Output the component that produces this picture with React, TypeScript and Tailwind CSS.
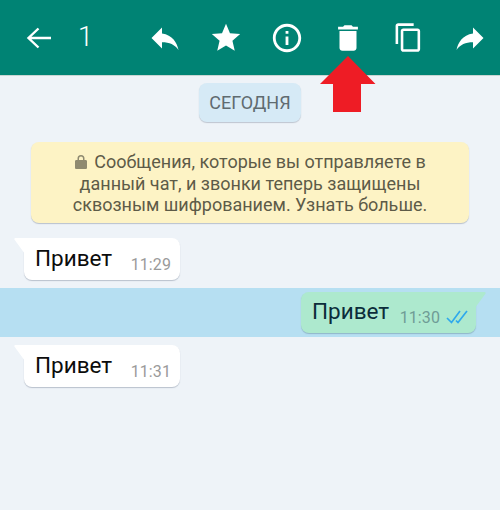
import React from "react";

function Icon({ d, size = 34, fill = "white" }: { d: string; size?: number; fill?: string }) {
  return (
    <svg width={size} height={size} viewBox="0 0 24 24" fill={fill}>
      <path d={d} />
    </svg>
  );
}

function Slot({ children, className = "w-[61px]" }: { children: React.ReactNode; className?: string }) {
  return <div className={`flex h-full shrink-0 items-center justify-center ${className}`}>{children}</div>;
}

function Incoming({ time }: { time: string }) {
  return (
    <div className="relative ml-6 flex h-[42px] w-[156px] rounded-b-lg rounded-tr-lg bg-white shadow-[0_1px_1px_rgba(120,130,150,0.45)]">
      <svg className="absolute -left-2.5 top-0" width="11" height="16" viewBox="0 0 11 16">
        <path d="M11 0H1.5C0.5 0 0 1 0.6 1.8L11 16z" fill="white" />
      </svg>
      <span className="ml-[11px] mt-[5px] text-[22.5px] leading-[30px] text-[#0c0c0c]">Привет</span>
      <span className="absolute right-[9px] top-[17px] text-[16px] leading-5 tracking-[0.1px] text-[#9a9a9a]">{time}</span>
    </div>
  );
}

export default function App() {
  return (
    <div className="flex h-[510px] w-[500px] flex-col overflow-hidden bg-[#eef3f8] font-['Roboto',sans-serif]">
      <header className="relative flex h-[76px] shrink-0 items-center border-b border-[#c9d6d3] bg-[#008374] pl-[8px]">
        <Slot className="w-[62px]">
          <svg width="28" height="24" viewBox="0 0 28 24" fill="none" stroke="white" strokeWidth="2.4">
            <path d="M26 12H4M13.5 2.5L3.5 12l10 9.5" />
          </svg>
        </Slot>
        <Slot className="w-[31px]">
          <span className="text-[27px] font-light leading-none text-white">1</span>
        </Slot>
        <Slot className="w-[33px]"><span /></Slot>
        <Slot>
          <Icon size={36} d="M10 9V5l-7 7 7 7v-4.1c5 0 8.500 1.600 11 5.100-1-5-4-10-11-11z" />
        </Slot>
        <Slot>
          <Icon d="M12 17.27L18.18 21l-1.64-7.03L22 9.24l-7.19-.61L12 2 9.19 8.63 2 9.24l5.46 4.73L5.82 21z" />
        </Slot>
        <Slot>
          <Icon d="M11 7h2v2h-2zm0 4h2v6h-2zm1-9C6.48 2 2 6.48 2 12s4.48 10 10 10 10-4.48 10-10S17.52 2 12 2zm0 18c-4.41 0-8-3.59-8-8s3.59-8 8-8 8 3.59 8 8-3.59 8-8 8z" />
        </Slot>
        <Slot>
          <Icon d="M6 19c0 1.1.9 2 2 2h8c1.1 0 2-.9 2-2V7H6v12zM19 4h-3.5l-1-1h-5l-1 1H5v2h14V4z" />
        </Slot>
        <Slot>
          <Icon size={31} d="M16 1H4c-1.1 0-2 .9-2 2v14h2V3h12V1zm3 4H8c-1.1 0-2 .9-2 2v14c0 1.1.9 2 2 2h11c1.1 0 2-.9 2-2V7c0-1.1-.9-2-2-2zm0 16H8V7h11v14z" />
        </Slot>
        <Slot>
          <Icon size={36} d="M14 9V5l7 7-7 7v-4.1c-5 0-8.500 1.600-11 5.100 1-5 4-10 11-11z" />
        </Slot>
        {/* red pointer over the delete icon */}
        <svg className="absolute left-[320px] top-[56px] z-10" width="56" height="56" viewBox="0 0 56 56">
          <path d="M28 0L55.5 28H41V56H13V28H0z" fill="#ee1c25" />
        </svg>
      </header>

      <main className="flex flex-col">
        <div className="mt-[7px] flex justify-center">
          <div className="flex h-[39px] w-[102px] items-center justify-center rounded-lg bg-[#d6eaf6] text-[18px] text-[#5f6b70] shadow-[0_1px_1px_rgba(120,130,150,0.4)]">
            СЕГОДНЯ
          </div>
        </div>

        <div className="mx-[31px] mt-5 flex h-[81px] flex-col items-center justify-center rounded-lg bg-[#fdf3c5] pt-[2px] text-center text-[18px] leading-[21.5px] text-[#5d5b48] shadow-[0_1px_1px_rgba(120,130,150,0.45)]">
          <p className="flex items-center">
            <svg className="mr-[6px]" width="14" height="16" viewBox="0 0 14 16">
              <path d="M3.5 6V4.5a3.5 3.5 0 0 1 7 0V6h1.200c.7 0 1.300.6 1.300 1.300v6.400c0 .7-.6 1.300-1.300 1.300H2.300C1.600 15 1 14.400 1 13.700V7.300C1 6.600 1.600 6 2.300 6zM5 6h4V4.500a2 2 0 0 0-4 0z" fill="#8f8a70" />
            </svg>
            Сообщения, которые вы отправляете в
          </p>
          <p>данный чат, и звонки теперь защищены</p>
          <p>сквозным шифрованием. Узнать больше.</p>
        </div>

        <div className="mt-[15px]">
          <Incoming time="11:29" />
        </div>

        <div className="mt-2 flex h-[49px] justify-end bg-[#b6dff2] pr-6 pt-1">
          <div className="relative flex h-[41px] w-[175px] rounded-b-lg rounded-tl-lg bg-[#ade9ce] shadow-[0_1px_1px_rgba(100,130,150,0.45)]">
            <svg className="absolute -right-2.5 top-0" width="11" height="16" viewBox="0 0 11 16">
              <path d="M0 0H9.500C10.500 0 11 1 10.400 1.800L0 16z" fill="#ade9ce" />
            </svg>
            <span className="ml-[11px] mt-[4px] text-[22.5px] leading-[30px] text-[#0b2c3a]">Привет</span>
            <span className="absolute right-[36px] top-[16px] text-[16px] leading-5 tracking-[0.1px] text-[#6f9c96]">11:30</span>
            <svg className="absolute right-[8px] top-[17px]" width="22" height="15" viewBox="0 0 22 15" fill="none" stroke="#2fa9ec" strokeWidth="1.700">
              <path d="M1 9l4.500 4.500L14 2M10 11.500l2 2L21 2" />
            </svg>
          </div>
        </div>

        <div className="mt-2">
          <Incoming time="11:31" />
        </div>
      </main>
    </div>
  );
}
